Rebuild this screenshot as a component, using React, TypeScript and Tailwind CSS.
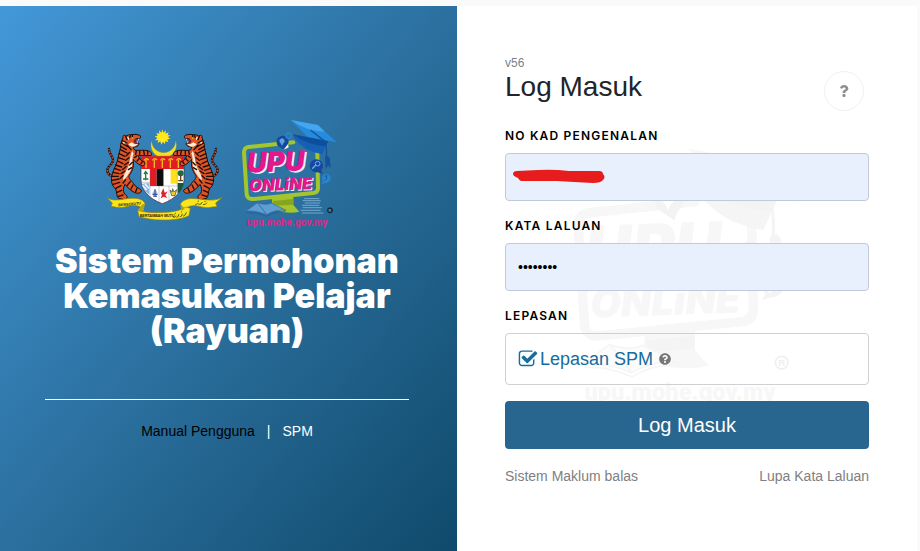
import React, { useState } from 'react';
import { FaQuestion, FaQuestionCircle } from 'react-icons/fa';

interface UpuLogoProps {
  className?: string;
  mono?: boolean;
}

const CoatOfArms = ({ className }: { className?: string }) => {
  const tiger = (
    <g>
      <path d="M58 184 C42 184 34 172 38 160 C42 150 56 146 54 134 C52 122 42 116 42 102" fill="none" stroke="#2a0f08" strokeWidth="7" strokeLinecap="round" />
      <path d="M58 184 C42 184 34 172 38 160 C42 150 56 146 54 134 C52 122 42 116 42 102" fill="none" stroke="#d8562a" strokeWidth="4" strokeDasharray="5 4" />
      <path
        d="M84 68 C82 62 88 58 93 63 C102 57 112 60 120 58 L132 60 C138 62 138 68 134 71 L124 71 C117 74 116 82 122 84 L131 84 C134 92 124 96 116 96 C114 102 118 106 124 106 C136 107 146 104 156 107 C166 108 172 114 169 121 C156 124 142 120 130 122 C132 132 140 138 149 142 C152 149 145 155 138 151 C126 146 120 138 114 133 C118 150 114 166 102 182 C100 190 108 196 116 206 C120 216 132 218 139 226 C140 233 130 237 120 233 C108 228 98 218 90 208 C84 218 84 228 88 236 C100 242 98 252 88 254 L70 250 C64 242 66 232 62 222 C50 212 46 196 52 178 C56 160 68 144 70 126 C72 112 78 100 77 88 Z"
        fill="#dd5426"
        stroke="#240d08"
        strokeWidth="3"
        strokeLinejoin="round"
      />
      <path d="M112 108 C104 120 106 140 100 154 C94 168 84 180 84 196 C92 190 104 176 110 158 C114 144 110 126 116 116 Z" fill="#fbe9d6" />
      <path d="M100 88 C106 96 114 96 120 94 L130 86 L119 88 L110 82 Z" fill="#fff3df" />
      <path d="M96 66 L104 68 L100 76 Z M84 76 L92 82 L84 90 Z" fill="#fff3df" />
      <path d="M118 74 L131 71 L122 78 L128 85 L119 84 Z" fill="#a3151b" />
      <path d="M131 71 L130 76 M127 84 L127 79" stroke="#fff" strokeWidth="2" />
      <path
        d="M92 64 L96 74 M82 76 L96 84 M79 84 L100 96 M77 94 L94 104 M76 104 L96 114 M72 116 L90 124 M96 90 L108 104 M70 128 L88 134 M68 138 L84 146 M62 150 L80 156 M58 160 L76 166 M54 172 L72 176 M52 184 L70 184 M51 196 L72 192 M54 208 L74 202 M62 220 L78 212 M66 232 L80 226 M70 244 L84 240 M94 122 L104 112 M92 136 L102 128 M88 150 L100 142 M82 164 L94 154 M78 176 L90 168 M76 190 L84 182 M84 204 L92 194 M96 212 L106 200 M108 222 L114 210 M122 230 L126 220 M112 142 L104 150 M110 158 L100 164 M124 108 L122 118 M134 108 L134 118 M146 107 L148 118 M158 109 L158 118 M118 128 L126 122 M126 138 L134 130 M138 146 L142 140 M106 62 L104 68 M112 60 L112 66"
        stroke="#1d0d08"
        strokeWidth="4"
        strokeLinecap="round"
      />
      <circle cx="112" cy="69" r="2" fill="#ffe600" />
    </g>
  );

  return (
    <svg viewBox="0 0 405 345" className={className} role="img" aria-label="Jata Negara">
      <path d="M170 78 A38 38 0 1 0 242 78 A33 32 0 0 1 170 78 Z" fill="#f6e21a" stroke="#a79712" />
      <path
        d="M202 43 L205 53 L212 46 L212 56 L221 52 L218 61 L227 61 L219 66 L226 72 L217 73 L220 82 L211 78 L210 88 L204 80 L199 89 L196 79 L188 84 L190 75 L180 76 L187 69 L179 64 L188 62 L184 54 L193 56 L192 46 L199 53 Z"
        fill="#ffe81c"
      />
      <path d="M138 124 H267 V196 C266 222 246 250 202 266 C158 250 139 222 138 196 Z" fill="#fff" stroke="#46232a" strokeWidth="2" />
      <path d="M138 124 H267 V162 H138 Z" fill="#e31b23" />
      <path
        d="M153 134 V159 M178 134 V159 M202 134 V159 M226 134 V159 M250 134 V159"
        stroke="#f5b91f"
        strokeWidth="4"
      />
      <path d="M147 136 q8 -9 14 -1 M172 136 q8 -9 14 -1 M196 136 q8 -9 14 -1 M220 136 q8 -9 14 -1 M244 136 q8 -9 14 -1" fill="none" stroke="#f5b91f" strokeWidth="4" />
      <path d="M165 162 H185 V213 H165 Z" fill="#e31b23" />
      <path d="M185 162 H206 V213 H185 Z" fill="#0c0c0e" />
      <path d="M206 162 H227 V213 H206 Z" fill="#fff" />
      <path d="M227 162 H247 V206 H227 Z" fill="#ffe01b" />
      <path d="M165 162 V254 M247 162 V238 M138 202 H165 M165 213 H247 M192 213 V261 M222 213 V257" stroke="#6b6570" strokeWidth="1" />
      <path d="M152 174 V196 M144 192 H160 M147 177 L152 170 L158 177" stroke="#247b3c" strokeWidth="4" fill="none" />
      <path d="M141 206 L163 204 V240 Q145 225 141 206 Z" fill="#8db4e8" />
      <path d="M143 211 L155 225 M150 207 L162 220" stroke="#fff" strokeWidth="4" />
      <circle cx="257" cy="175" r="9" fill="#12723c" />
      <path d="M257 178 V197 M250 197 H264" stroke="#674317" strokeWidth="4" />
      <path d="M248 204 H266 Q262 226 248 236 Z" fill="#155935" />
      <path d="M173 233 Q180 216 187 233 L184 244 H175 Z" fill="#9fb7e4" />
      <path d="M172 238 H188 M175 244 H186 M180 222 V242" stroke="#26448e" strokeWidth="3" />
      <path d="M198 235 L205 220 L209 233 L218 229 L211 240 L217 249 L206 245 L197 250 L201 240 Z" fill="#e02130" />
      <path d="M225 225 L232 231 L233 221 L237 231 L245 224 L240 242 H230 Z" fill="#f0d230" stroke="#38353c" strokeWidth="2" />
      {tiger}
      <g transform="translate(405 0) scale(-1 1)">{tiger}</g>
      <path d="M34 247 C54 262 82 251 108 250 C128 249 144 252 150 266 L142 280 L132 274 C108 264 84 284 60 276 L48 274 L52 264 Z" fill="#f8e51d" stroke="#8a7d12" strokeWidth="2" />
      <path d="M382 247 C356 262 326 252 302 251 C280 249 262 254 256 268 L268 282 L284 274 C306 266 326 284 352 276 L366 275 L362 264 Z" fill="#f8e51d" stroke="#8a7d12" strokeWidth="2" />
      <path d="M128 286 C154 294 178 293 206 292 C232 292 256 286 274 276 L286 280 L282 302 C262 312 230 316 204 315 C178 316 154 310 132 306 Z" fill="#f8e51d" stroke="#8a7d12" strokeWidth="2" />
      <path d="M128 286 L142 268 L150 266 L145 290 Z M268 282 L256 268 L260 288 Z" fill="#b7a513" />
      <g fill="#1d1a08" fontFamily="Liberation Sans, sans-serif" fontWeight="700" fontStyle="italic">
        <text x="70" y="274" fontSize="11" transform="rotate(-5 70 274)">BERSEKUTU</text>
        <text x="134" y="306" fontSize="11">BERTAMBAH MUTU</text>
      </g>
      <path
        d="M234 306 q5 4 9 -4 m1 5 q7 0 8 -10 m2 9 q8 -1 8 -10 m2 8 q8 -2 10 -12 M240 296 l3 -2 M258 292 l3 -2 M300 270 q8 -7 13 -2 q6 2 9 -7 m2 8 q8 1 12 -6 M308 259 l4 -1 M328 260 l4 -1"
        fill="none"
        stroke="#1d1a08"
        strokeWidth="2"
      />
    </svg>
  );
};

const UpuLogo = ({ className, mono = false }: UpuLogoProps) => {
  const tone = (color: string, gray = '#f7f7f7') => (mono ? gray : color);

  return (
    <svg viewBox="0 0 360 360" className={className} role="img" aria-label="UPU Online">
      <path
        d="M262 112 L264 218 Q264 232 250 234 L70 252 Q52 254 50 238 L42 112 Q42 98 56 96 L190 82"
        fill="none"
        stroke={tone('#a4c52b')}
        strokeWidth="12"
        strokeLinecap="round"
      />
      <path d="M126 248 L190 242 V270 L208 290 Q190 295 160 292 L126 282 Z" fill={tone('#a4c52b')} />
      <path d="M128 258 L190 252 V269 L128 272 Z" fill={tone('#86a51f', '#f4f4f4')} />
      <path d="M48 288 L82 263 Q108 272 124 264 L168 286 Q138 282 110 299 Q82 286 48 288 Z" fill={tone('#5f9ed0', '#fcfcfc')} stroke={tone('#3267ad', '#f5f5f5')} strokeWidth="2" />
      <path d="M50 292 Q82 291 110 304 Q138 287 166 290 M82 263 Q96 280 110 299" fill="none" stroke={tone('#29559c', '#f5f5f5')} strokeWidth="2" />
      {!mono && (
        <path
          d="M222 251 H268 M218 257 H272 M224 264 H270 M216 271 H268 M218 278 H276 M212 286 H272 M216 294 H280"
          stroke="#78a8cc"
          strokeWidth="3"
        />
      )}
      <g fontFamily="Inter, Roboto, sans-serif" fontWeight="900" fontStyle="italic" strokeLinejoin="round">
        {!mono && (
          <g fill="#e9f1f7">
            <text x="56" y="177" fontSize="83" transform="rotate(-2 56 177)">UPU</text>
            <text x="61" y="232" fontSize="50" transform="rotate(-2 61 232)">ONLiNE</text>
          </g>
        )}
        <g fill={tone('#e6178a')}>
          <text x="51" y="173" fontSize="83" transform="rotate(-2 51 173)">UPU</text>
          <text x="58" y="229" fontSize="50" transform="rotate(-2 58 229)">ONLiNE</text>
        </g>
      </g>
      <path d="M140 82 A18 17 0 1 1 172 90 Q166 96 164 106 Q150 96 143 92 Q140 88 140 82 Z" fill={tone('#17479e', '#f3f3f3')} />
      <path d="M148 79 a8 8 0 1 1 12 6 l-4 8 l-4 -8 q-3 -3 -4 -6" fill={tone('#58a6dd', '#fff')} />
      {!mono && <path d="M160 105 L174 88 L176 97 Z" fill="#fff" />}
      <circle cx="176" cy="62" r="8" fill="none" stroke={tone('#2588ce')} strokeWidth="4" />
      <path d="M188 58 L294 79 L277 118 Q222 110 194 70 Z" fill={tone('#155fb4', '#f5f5f5')} />
      <path d="M188 58 L294 79 L288 94 Q232 91 188 58 Z" fill={tone('#0f4e9d', '#f3f3f3')} />
      <path d="M182 15 L264 30 L320 82 L232 65 Z" fill={tone('#258bdd')} />
      <path d="M182 15 L264 30 L284 50 Q230 49 182 15 Z" fill={tone('#46a6ed')} />
      <path d="M242 46 L286 80 Q291 100 289 132" fill="none" stroke={tone('#14529f', '#f4f4f4')} strokeWidth="4" />
      <path d="M285 127 Q292 118 299 129 L302 160 L294 151 L287 163 Z" fill={tone('#14529f', '#f4f4f4')} />
      <path d="M239 151 A20 20 0 1 1 274 166 L278 177 L263 172 A21 21 0 0 1 239 151 Z" fill={tone('#17479e', '#f3f3f3')} />
      <circle cx="263" cy="146" r="7" fill="none" stroke={tone('#68b4e9', '#fff')} strokeWidth="3" />
      <path d="M257 151 L248 160" stroke={tone('#68b4e9', '#fff')} strokeWidth="4" strokeLinecap="round" />
      <path d="M276 190 A13 13 0 1 1 288 203 L275 207 L279 199 Z" fill={tone('#2588ce', '#f4f4f4')} />
      <path d="M284 185 L290 181 V190 L284 197" fill="none" stroke={tone('#1c559f', '#fff')} strokeWidth="3" />
      <circle cx="300" cy="286" r="8" fill={tone('#14273a', 'none')} stroke={tone('#14273a', '#efefef')} strokeWidth="2" />
      <text x="300" y="290" fontSize="12" textAnchor="middle" fontFamily="Liberation Sans, sans-serif" fontWeight="700" fill={tone('#6f9fc4', '#efefef')}>R</text>
      <text x="50" y="334" fontSize="30" fontFamily="Roboto, sans-serif" fontWeight="900" fill={tone('#d22c8c')}>upu.mohe.gov.my</text>
    </svg>
  );
};

const CheckSquareIcon = ({ checked }: { checked: boolean }) => (
  <svg viewBox="0 0 1792 1792" className="size-5 fill-current" aria-hidden="true">
    <path d="M1472 930v318q0 119-84.5 203.5t-203.5 84.5h-832q-119 0-203.5-84.5t-84.5-203.5v-832q0-119 84.5-203.5t203.5-84.5h832q63 0 117 25 15 7 18 23 3 17-9 29l-49 49q-10 10-23 10-3 0-9-2-23-6-45-6h-832q-66 0-113 47t-47 113v832q0 66 47 113t113 47h832q66 0 113-47t47-113v-254q0-13 9-22l64-64q10-10 23-10 6 0 12 3 20 8 20 29z" />
    {checked && (
      <path d="M1703 441l-814 814q-24 24-57 24t-57-24l-430-430q-24-24-24-57t24-57l110-110q24-24 57-24t57 24l263 263 647-647q24-24 57-24t57 24l110 110q24 24 24 57t-24 57z" />
    )}
  </svg>
);

const BrandPanel = () => (
  <div className="flex flex-col items-center bg-linear-to-br from-[#4398d8] via-[#2b709f] to-[#0f4a6b] pt-[109px] pr-12 pl-[45px] text-white">
    <div className="flex justify-center pr-2.5">
      <CoatOfArms className="h-[115px] w-[135px]" />
      <UpuLogo className="size-[120px]" />
    </div>
    <h1 className="mt-2 text-center font-[Inter,'Liberation_Sans',sans-serif] text-[34px] leading-[35px] font-black">
      Sistem Permohonan Kemasukan Pelajar (Rayuan)
    </h1>
    <hr className="mt-[51px] w-full border-white" />
    <div className="mt-[21px] flex gap-3 text-sm">
      <a href="#manual" className="text-black">Manual Pengguna</a>
      <span>|</span>
      <a href="#spm">SPM</a>
    </div>
  </div>
);

const LoginForm = () => {
  const [formData, setFormData] = useState({ no_kp: '', password: 'password', spm: true });

  const handleChange = (e: React.ChangeEvent<HTMLInputElement>) => {
    const { name, type, value, checked } = e.target;
    setFormData({ ...formData, [name]: type === 'checkbox' ? checked : value });
  };

  const labelClass = "mb-2 block font-[Inter,sans-serif] text-xs leading-[18px] font-semibold tracking-widest text-black";
  const inputClass = 'block h-12 w-full rounded border border-[#c2c9db] bg-[#e8f0fe] px-3 text-sm text-black';

  return (
    <form className="col-start-1 row-start-1 px-12 pt-12" onSubmit={(e) => e.preventDefault()}>
      <div className="mb-4 flex items-end justify-between">
        <div className="pb-2">
          <div className="text-xs leading-4 text-[#7b838a]">v56</div>
          <h2 className="text-[28px] leading-8 text-[#212529]">Log Masuk</h2>
        </div>
        <button
          type="button"
          aria-label="Bantuan"
          className="mt-[17px] mr-[5px] flex size-10 items-center justify-center rounded-full border border-[#f0f0f0] text-xs text-[#8f8f8f]"
        >
          <FaQuestion />
        </button>
      </div>

      <div className="mb-4">
        <label htmlFor="no_kp" className={labelClass}>NO KAD PENGENALAN</label>
        <div className="relative">
          <input id="no_kp" name="no_kp" type="text" className={inputClass} value={formData.no_kp} onChange={handleChange} />
          <svg viewBox="0 0 92 14" className="pointer-events-none absolute top-4 left-2 h-[14px] w-[92px]" aria-hidden="true">
            <path d="M0 5 Q0 2 4 2 L25 1 Q40 0 56 2 L86 2 Q90 2 90 5 Q93 8 90 11 Q88 14 80 14 Q60 13 44 12 L8 12 Q6 11 5 9 Q0 7 0 5 Z" fill="#e71d1d" />
          </svg>
        </div>
      </div>

      <div className="mb-4">
        <label htmlFor="password" className={labelClass}>KATA LALUAN</label>
        <input id="password" name="password" type="password" className={inputClass} value={formData.password} onChange={handleChange} />
      </div>

      <fieldset className="mb-4">
        <legend className={labelClass}>LEPASAN</legend>
        <div className="flex h-13 items-center gap-1.5 rounded border border-[#ced0d3] px-3">
          <label className="flex cursor-pointer items-center gap-0.5 text-lg text-[#146c9f]">
            <input type="checkbox" name="spm" className="sr-only" checked={formData.spm} onChange={handleChange} />
            <CheckSquareIcon checked={formData.spm} />
            Lepasan SPM
          </label>
          <FaQuestionCircle className="size-3 text-[#777]" />
        </div>
      </fieldset>

      <button type="submit" className="block h-12 w-full rounded bg-[#29668f] text-xl text-white">
        Log Masuk
      </button>

      <div className="flex justify-between py-[17px] text-sm text-[#808080]">
        <a href="#maklum-balas">Sistem Maklum balas</a>
        <a href="#lupa">Lupa Kata Laluan</a>
      </div>
    </form>
  );
};

export default function App() {
  return (
    <div className="flex min-h-screen bg-[#fafafa] pt-1.5 pr-[3px] font-['Liberation_Sans',Arial,sans-serif]">
      <main className="grid grow grid-cols-[457fr_460fr] bg-white">
        <BrandPanel />
        <div className="grid">
          <div className="col-start-1 row-start-1 flex items-center justify-center">
            <UpuLogo mono className="size-[284px]" />
          </div>
          <LoginForm />
        </div>
      </main>
    </div>
  );
}
